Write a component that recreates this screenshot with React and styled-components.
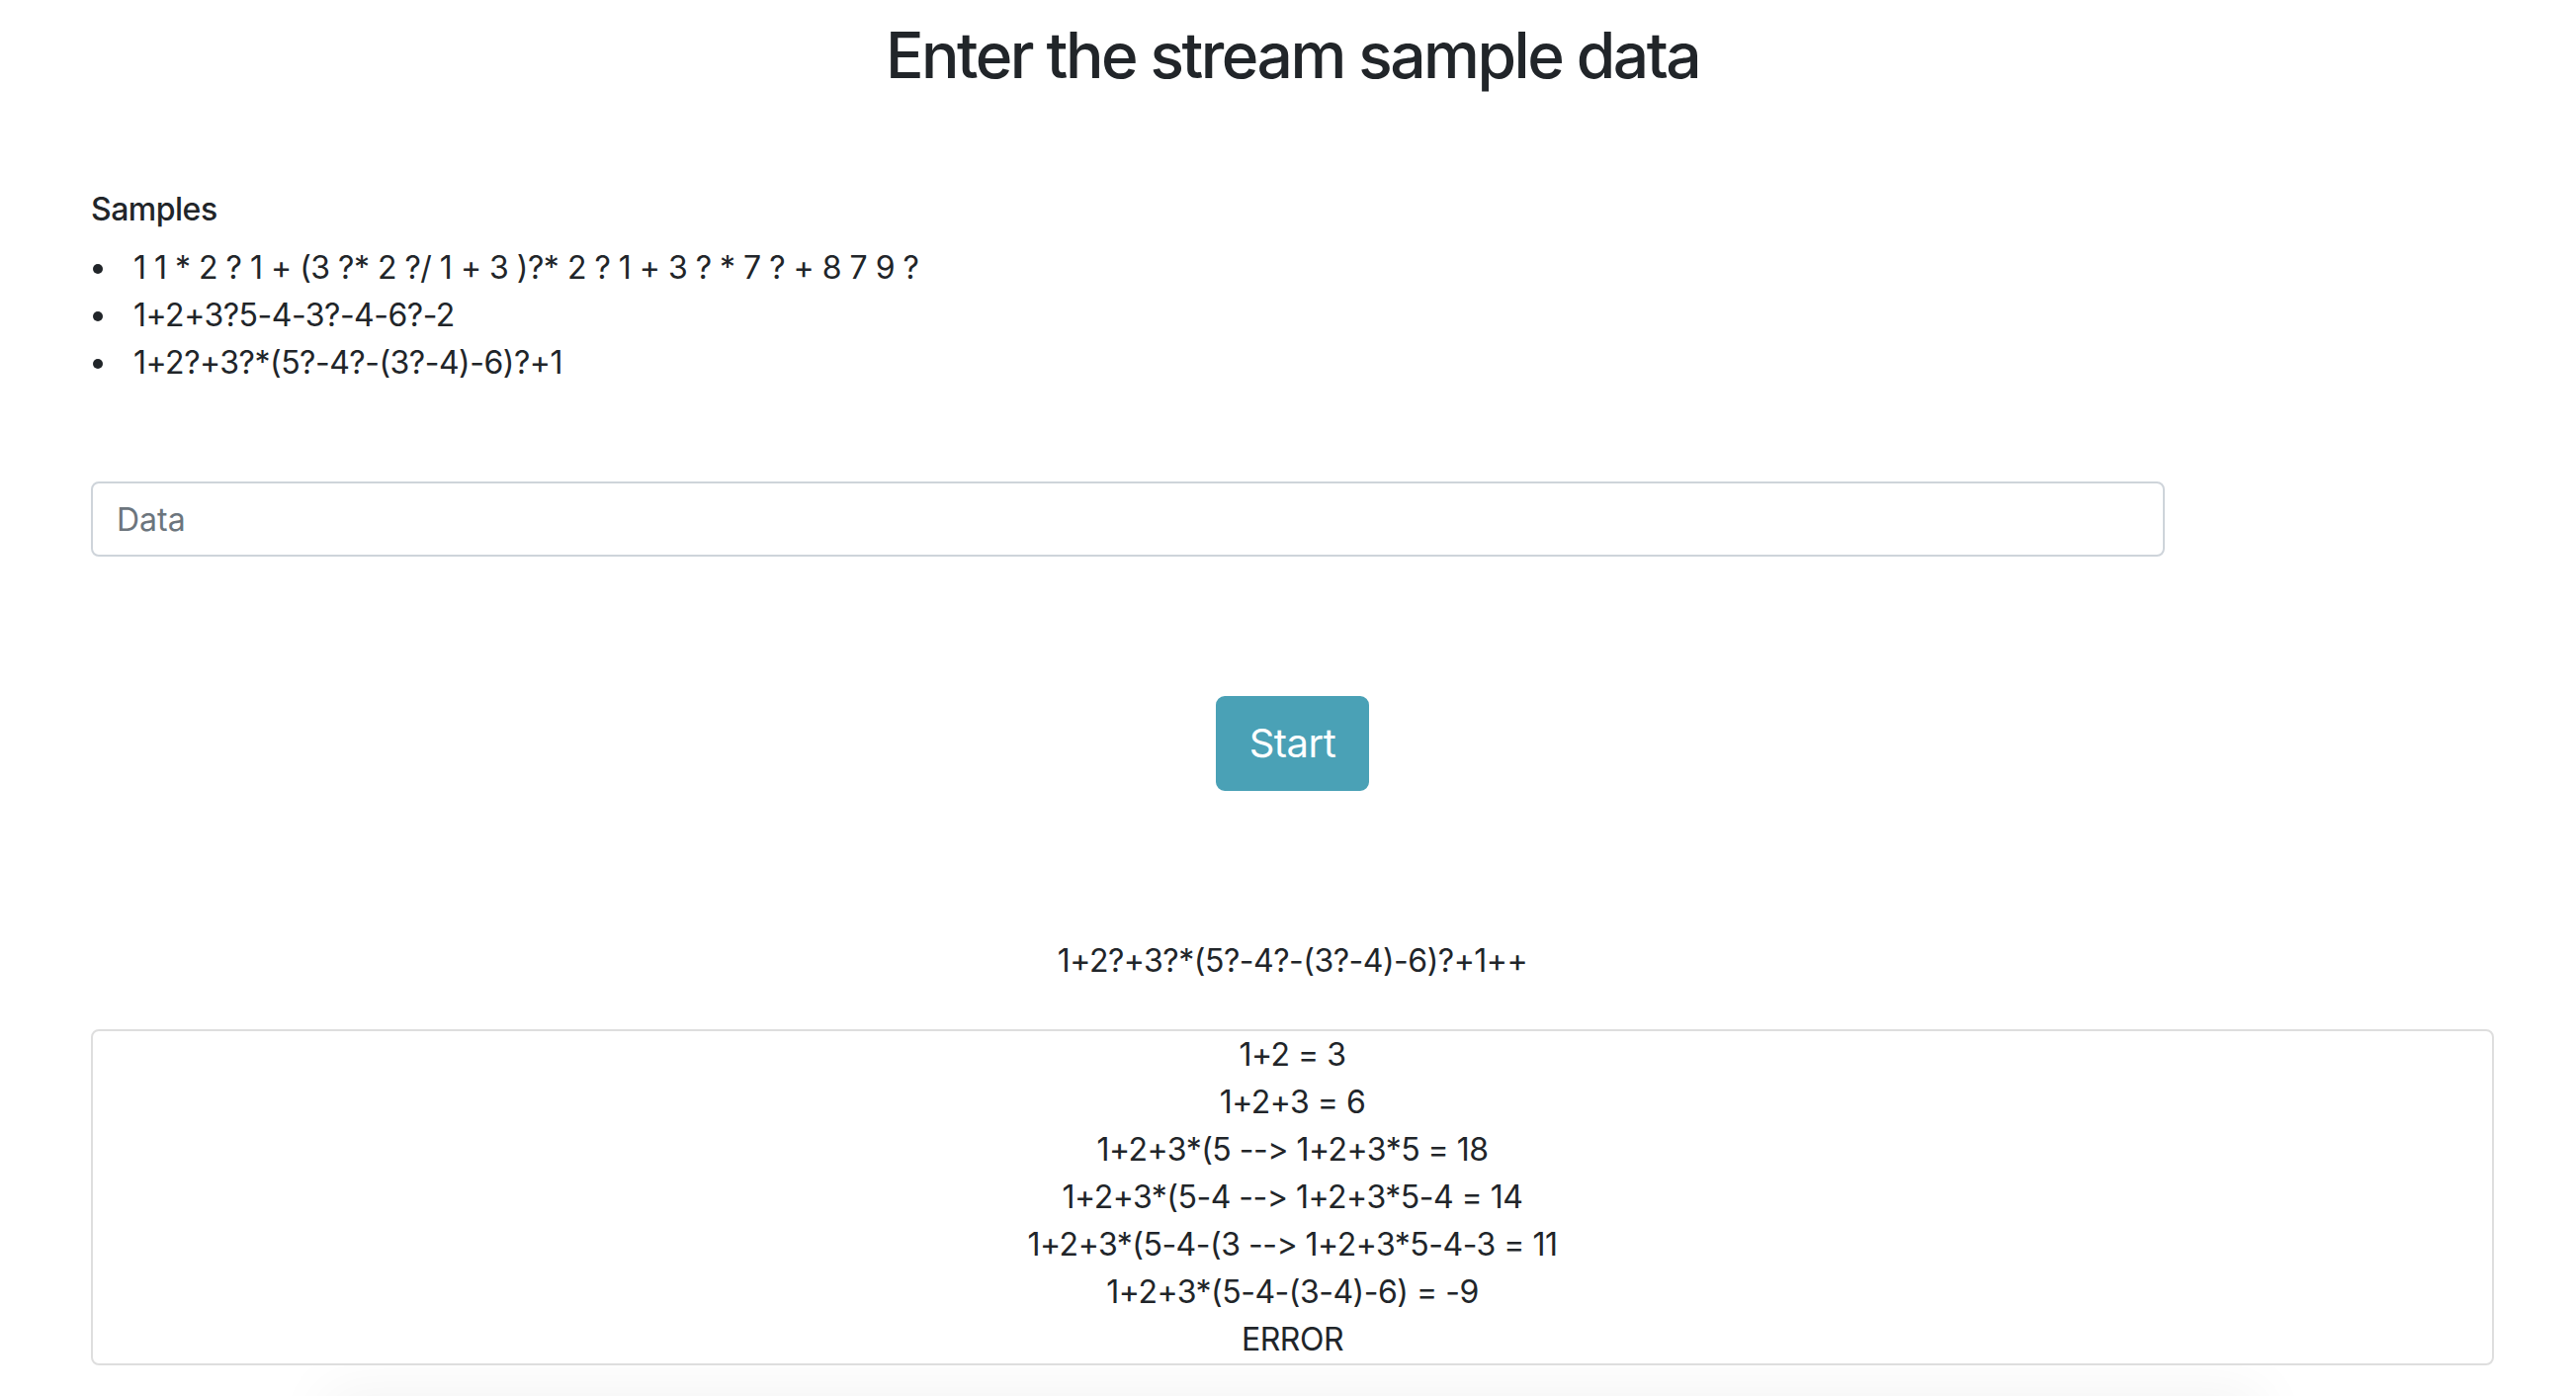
import React, { useState } from "react";
import styled, { createGlobalStyle } from "styled-components";

const GlobalStyle = createGlobalStyle`
  body {
    margin: 0;
    background: #fff;
    color: #212529;
    font-family: Inter, "Noto Sans", "Liberation Sans", sans-serif;
    font-size: 32px;
    line-height: 1.5;
    letter-spacing: -0.5px;
    font-feature-settings: "calt" 0, "liga" 0;
    font-variant-ligatures: none;
  }
`;

const Page = styled.div`
  padding: 18px 83px 0 92px;
`;

const Title = styled.h2`
  margin: 0 0 98px;
  font-size: 64px;
  font-weight: 500;
  line-height: 1.2;
  letter-spacing: -2.5px;
  text-align: center;
`;

const Label = styled.h6`
  margin: 0 0 16px;
  font-size: 32px;
  font-weight: 500;
  line-height: 1.2;
`;

const SampleList = styled.ul`
  margin: 0 0 96px;
  padding: 0;
  list-style: none;
`;

const SampleItem = styled.li`
  display: flex;
  align-items: center;
  &::before {
    content: "";
    flex: none;
    width: 10px;
    height: 10px;
    margin: 2px 31px 0 2px;
    border-radius: 50%;
    background: #212529;
  }
`;

const DataInput = styled.input`
  display: block;
  box-sizing: border-box;
  width: 2098px;
  height: 76px;
  padding: 12px 24px;
  border: 2px solid #ced4da;
  border-radius: 8px;
  font: inherit;
  color: #495057;
  outline: none;
  &::placeholder {
    color: #6c757d;
  }
`;

const Actions = styled.div`
  display: flex;
  justify-content: center;
  margin: 141px 0 148px;
`;

const StartButton = styled.button`
  padding: 16px 32px;
  border: 2px solid #4aa1b6;
  border-radius: 9px;
  background: #4aa1b6;
  color: #fff;
  font-family: inherit;
  font-size: 40px;
  line-height: 1.5;
  letter-spacing: -0.5px;
  cursor: pointer;
`;

const Expression = styled.div`
  text-align: center;
  margin-bottom: 45px;
`;

const ResultBox = styled.div`
  position: relative;
  z-index: 1;
  border: 2px solid #dedede;
  border-radius: 8px;
  background: #fff;
  text-align: center;
`;

const ResultLine = styled.div`
  line-height: 48px;
`;

const Shade = styled.div`
  margin: 55px auto 0;
  width: 1900px;
  height: 40px;
  box-shadow: 0 0 60px 30px rgba(0, 0, 0, 0.05);
`;

const samples = [
  "1 1 * 2 ? 1 + (3 ?* 2 ?/ 1 + 3 )?* 2 ? 1 + 3 ? * 7 ? + 8 7 9 ?",
  "1+2+3?5-4-3?-4-6?-2",
  "1+2?+3?*(5?-4?-(3?-4)-6)?+1",
];

const results = [
  "1+2 = 3",
  "1+2+3 = 6",
  "1+2+3*(5 --> 1+2+3*5 = 18",
  "1+2+3*(5-4 --> 1+2+3*5-4 = 14",
  "1+2+3*(5-4-(3 --> 1+2+3*5-4-3 = 11",
  "1+2+3*(5-4-(3-4)-6) = -9",
  "ERROR",
];

export default function App() {
  const [data, setData] = useState("");

  return (
    <Page>
      <GlobalStyle />
      <Title>Enter the stream sample data</Title>
      <Label>Samples</Label>
      <SampleList>
        {samples.map((s) => (
          <SampleItem key={s}>{s}</SampleItem>
        ))}
      </SampleList>
      <DataInput
        placeholder="Data"
        value={data}
        onChange={(e) => setData(e.target.value)}
      />
      <Actions>
        <StartButton>Start</StartButton>
      </Actions>
      <Expression>1+2?+3?*(5?-4?-(3?-4)-6)?+1++</Expression>
      <ResultBox>
        {results.map((r) => (
          <ResultLine key={r}>{r}</ResultLine>
        ))}
      </ResultBox>
      <Shade />
    </Page>
  );
}
